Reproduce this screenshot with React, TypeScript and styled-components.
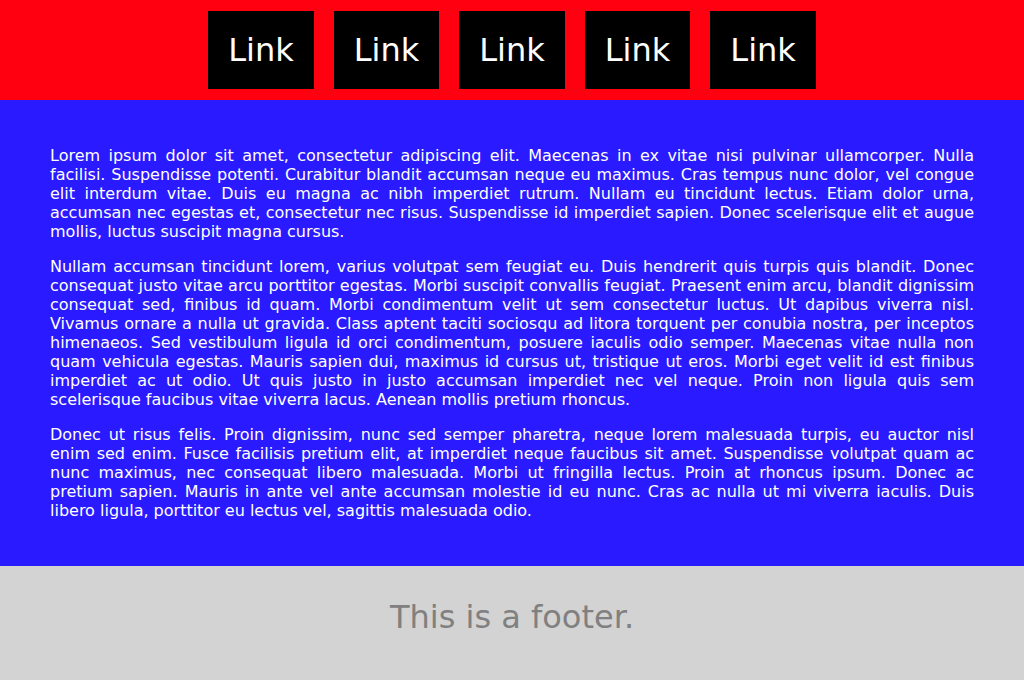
import React from "react";
import styled, { createGlobalStyle } from "styled-components";

const Global = createGlobalStyle`
  html, body { margin: 0; padding: 0; }
  body { font-family: "DejaVu Sans", sans-serif; }
`;

const Page = styled.div`
  min-height: 100vh;
  display: flex;
  flex-direction: column;
`;

const Header = styled.header`
  background: #ff0010;
  height: 100px;
  display: flex;
  align-items: center;
  justify-content: center;
  flex-shrink: 0;
`;

const Nav = styled.nav`
  display: flex;
  gap: 20px;
`;

const NavLink = styled.a`
  display: block;
  background: #000;
  color: #fff;
  font-size: 32px;
  line-height: 38px;
  padding: 20px 20px;
  text-decoration: none;
`;

const Main = styled.main`
  background: #2a1aff;
  color: #fff;
  padding: 30px 50px;
`;

const Para = styled.p`
  margin: 16px 0;
  font-size: 16px;
  line-height: 19px;
  text-align: justify;
`;

const Footer = styled.footer`
  flex: 1;
  background: #d3d3d3;
  color: #808080;
  text-align: center;
  font-size: 32px;
  padding: 32px 0;
  line-height: 38px;
`;

const paras = [
  "Lorem ipsum dolor sit amet, consectetur adipiscing elit. Maecenas in ex vitae nisi pulvinar ullamcorper. Nulla facilisi. Suspendisse potenti. Curabitur blandit accumsan neque eu maximus. Cras tempus nunc dolor, vel congue elit interdum vitae. Duis eu magna ac nibh imperdiet rutrum. Nullam eu tincidunt lectus. Etiam dolor urna, accumsan nec egestas et, consectetur nec risus. Suspendisse id imperdiet sapien. Donec scelerisque elit et augue mollis, luctus suscipit magna cursus.",
  "Nullam accumsan tincidunt lorem, varius volutpat sem feugiat eu. Duis hendrerit quis turpis quis blandit. Donec consequat justo vitae arcu porttitor egestas. Morbi suscipit convallis feugiat. Praesent enim arcu, blandit dignissim consequat sed, finibus id quam. Morbi condimentum velit ut sem consectetur luctus. Ut dapibus viverra nisl. Vivamus ornare a nulla ut gravida. Class aptent taciti sociosqu ad litora torquent per conubia nostra, per inceptos himenaeos. Sed vestibulum ligula id orci condimentum, posuere iaculis odio semper. Maecenas vitae nulla non quam vehicula egestas. Mauris sapien dui, maximus id cursus ut, tristique ut eros. Morbi eget velit id est finibus imperdiet ac ut odio. Ut quis justo in justo accumsan imperdiet nec vel neque. Proin non ligula quis sem scelerisque faucibus vitae viverra lacus. Aenean mollis pretium rhoncus.",
  "Donec ut risus felis. Proin dignissim, nunc sed semper pharetra, neque lorem malesuada turpis, eu auctor nisl enim sed enim. Fusce facilisis pretium elit, at imperdiet neque faucibus sit amet. Suspendisse volutpat quam ac nunc maximus, nec consequat libero malesuada. Morbi ut fringilla lectus. Proin at rhoncus ipsum. Donec ac pretium sapien. Mauris in ante vel ante accumsan molestie id eu nunc. Cras ac nulla ut mi viverra iaculis. Duis libero ligula, porttitor eu lectus vel, sagittis malesuada odio.",
];

export default function App() {
  return (
    <Page>
      <Global />
      <Header>
        <Nav>
          {[0, 1, 2, 3, 4].map((i) => (
            <NavLink key={i} href="#">Link</NavLink>
          ))}
        </Nav>
      </Header>
      <Main>
        {paras.map((p, i) => (
          <Para key={i}>{p}</Para>
        ))}
      </Main>
      <Footer>This is a footer.</Footer>
    </Page>
  );
}
